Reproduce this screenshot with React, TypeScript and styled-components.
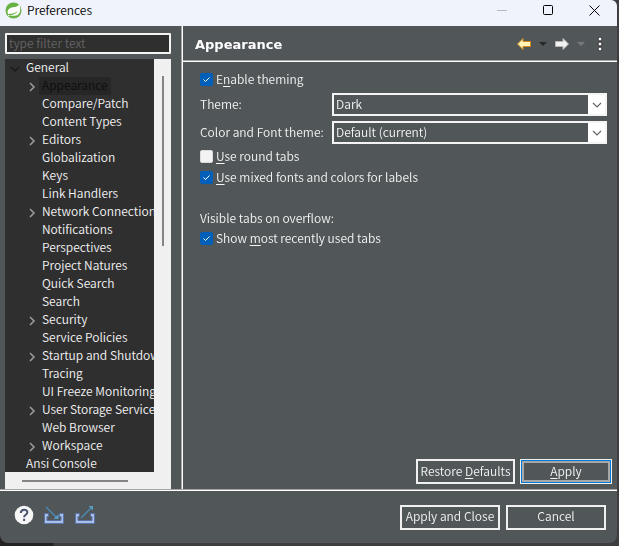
import React, { useState } from 'react';
import styled, { createGlobalStyle } from 'styled-components';

const Global = createGlobalStyle`
  * { box-sizing: border-box; }
  body { margin: 0; background: #393b3d; }
  body, button, input, select {
    font-family: "Noto Sans CJK KR", "Noto Sans", sans-serif;
    font-size: 12px;
    font-weight: 350;
    line-height: 16px;
  }
  u { text-underline-offset: 2px; }
`;

const Desktop = styled.div`
  height: 100vh;
  padding: 0 2px 3px 0;
  display: flex;
  background: linear-gradient(90deg, #242223 53px, #3f3d40 54px);
`;

const Window = styled.div`
  flex: 1;
  min-width: 0;
  display: flex;
  flex-direction: column;
  background: #515658;
  color: #f4f4f4;
  border-radius: 0 6px 8px 8px;
  overflow: hidden;
`;

const TitleBar = styled.header`
  height: 26px;
  flex: none;
  display: flex;
  align-items: center;
  padding: 0 15px 6px 5px;
  gap: 5px;
  background: #f0f3fb;
  color: #000;
`;

const WindowTitle = styled.h1`
  flex: 1;
  margin: 0;
  font-size: 12px;
  font-weight: 350;
`;

const WindowControls = styled.div`
  display: flex;
  gap: 30px;
`;

const IconButton = styled.button<{ $size?: number }>`
  display: inline-flex;
  align-items: center;
  justify-content: center;
  width: ${(p) => p.$size ?? 16}px;
  height: ${(p) => p.$size ?? 16}px;
  padding: 0;
  border: 0;
  background: none;
  color: inherit;
  svg { display: block; flex: none; }
`;

const Main = styled.div`
  flex: 1;
  display: flex;
  min-height: 0;
`;

const Sidebar = styled.aside`
  width: 181px;
  flex: none;
  display: flex;
  flex-direction: column;
  padding: 7px 10px 0 5px;
`;

const Filter = styled.input`
  width: 100%;
  height: 21px;
  flex: none;
  margin-bottom: 5px;
  padding: 0 2px 2px;
  border: 2px solid #f4f4f4;
  border-radius: 1px;
  background: #2f2f2f;
  color: #eee;
  outline: 0;
  &::placeholder { color: #646464; opacity: 1; }
`;

const TreeFrame = styled.div`
  flex: 1;
  min-height: 0;
  display: grid;
  grid-template-columns: minmax(0, 1fr) 17px;
  grid-template-rows: minmax(0, 1fr) 17px;
  background: #f0f0f0;
`;

const Tree = styled.ul`
  margin: 0;
  padding: 0;
  list-style: none;
  background: #2f2f2f;
  overflow: auto;
  scrollbar-width: none;
`;

const TreeItem = styled.li<{ $level: number }>`
  height: 18px;
  display: flex;
  align-items: flex-start;
  padding-left: ${(p) => 4 + p.$level * 16}px;
  white-space: nowrap;
`;

const Twisty = styled.span<{ $dark?: boolean }>`
  width: 14px;
  height: 18px;
  flex: none;
  display: flex;
  align-items: flex-end;
  color: ${(p) => (p.$dark ? '#191919' : '#9a9a9a')};
  svg { display: block; }
`;

const TreeLabel = styled.span<{ $selected?: boolean }>`
  height: 18px;
  padding: 0 3px;
  border-radius: 2px;
  background: ${(p) => (p.$selected ? '#262626' : 'transparent')};
  color: ${(p) => (p.$selected ? '#0c0c0c' : '#f4f4f4')};
`;

const Track = styled.div<{ $horizontal?: boolean }>`
  padding: ${(p) => (p.$horizontal ? '8px 26px 0 17px' : '17px 0 0 8px')};
`;

const Thumb = styled.div<{ $horizontal?: boolean }>`
  width: ${(p) => (p.$horizontal ? 'auto' : '2px')};
  height: ${(p) => (p.$horizontal ? '2px' : '170px')};
  background: #858585;
`;

const Page = styled.section`
  flex: 1;
  min-width: 0;
  display: flex;
  flex-direction: column;
  padding-left: 1px;
  border-left: 1px solid #a2a4a5;
  box-shadow: inset 1px 0 #fff;
`;

const PageHeader = styled.div`
  height: 36px;
  flex: none;
  display: flex;
  align-items: center;
  justify-content: space-between;
  padding: 0 9px 0 12px;
  border-bottom: 1px solid #fff;
  box-shadow: inset 0 -1px #a2a4a5;
`;

const PageTitle = styled.h2`
  margin: 0;
  padding-top: 2px;
  font: 700 13px/18px "DejaVu Sans", sans-serif;
  color: #fff;
`;

const PageTools = styled.div`
  display: flex;
  align-items: center;
  gap: 3px;
  padding-top: 1px;
`;

const Form = styled.form`
  flex: 1;
  display: flex;
  flex-direction: column;
  padding: 8px 10px 5px 17px;
`;

const CheckRow = styled.label`
  height: 19px;
  display: flex;
  align-items: center;
  gap: 3px;
  & > span { padding-bottom: 2px; }
  & + & { margin-top: 2px; }
`;

const CheckBox = styled.input`
  appearance: none;
  width: 13px;
  height: 13px;
  flex: none;
  margin: 0;
  border: 1px solid #dcdcdc;
  border-radius: 2px;
  background: #f3f3f3;
  &:checked {
    border-color: #005fb8;
    background: #005fb8 url("data:image/svg+xml,%3Csvg xmlns='http://www.w3.org/2000/svg' viewBox='0 0 11 11'%3E%3Cpath d='M2.5 5.5l2 2 4-4' fill='none' stroke='white'/%3E%3C/svg%3E");
  }
`;

const Fields = styled.div`
  display: grid;
  grid-template-columns: 123px minmax(0, 1fr);
  gap: 5px 9px;
  align-items: center;
  margin: 4px 0 3px;
`;

const FieldLabel = styled.label`
  padding-bottom: 2px;
  white-space: nowrap;
`;

const SelectFrame = styled.div`
  display: grid;
  grid-template-columns: minmax(0, 1fr) 17px;
  align-items: center;
  height: 23px;
  border: 2px solid #f4f4f4;
  background: linear-gradient(270deg, #fff 17px, #515658 17px);
  svg { grid-area: 1 / 2; justify-self: center; pointer-events: none; }
`;

const Select = styled.select`
  grid-area: 1 / 1 / 2 / 3;
  appearance: none;
  width: 100%;
  padding: 0 20px 2px 2px;
  border: 0;
  outline: 0;
  background: transparent;
  color: #f4f4f4;
`;

const GroupLabel = styled.p`
  margin: 23px 0 3px;
`;

const Actions = styled.div`
  display: flex;
  justify-content: flex-end;
  gap: 5px;
  margin: auto -5px 0 0;
`;

const Button = styled.button<{ $width: number; $focused?: boolean }>`
  width: ${(p) => p.$width}px;
  height: 25px;
  padding: 0 0 2px;
  border: 2px solid #f0f0f0;
  background: #515658;
  color: #f4f4f4;
  white-space: nowrap;
  ${(p) => p.$focused && `
    border-width: 1px;
    box-shadow: inset 0 0 0 1px #0078d7, inset 0 0 0 3px #a8a8a8;
  `}
`;

const Footer = styled.footer`
  height: 54px;
  flex: none;
  display: flex;
  align-items: center;
  gap: 6px;
  padding: 1px 11px 0 14px;
  border-top: 1px solid #a2a4a5;
  box-shadow: inset 0 1px #fff;
`;

const FooterTools = styled.div`
  flex: 1;
  display: flex;
  align-items: center;
  gap: 9px;
  padding-bottom: 4px;
`;

const ChevronRight = () => (
  <svg width="14" height="14" viewBox="0 0 14 14" fill="none" stroke="currentColor" strokeWidth="1.6"><path d="M5 2l4 4-4 4" /></svg>
);
const ChevronDown = () => (
  <svg width="14" height="14" viewBox="0 0 14 14" fill="none" stroke="currentColor" strokeWidth="1.4"><path d="M2 4l4 4 4-4" /></svg>
);
const SelectArrow = () => (
  <svg width="10" height="6" viewBox="0 0 10 6" fill="none" stroke="#666" strokeWidth="1.2"><path d="M1 1l4 4 4-4" /></svg>
);
const Triangle = ({ color }: { color: string }) => (
  <svg width="8" height="4" viewBox="0 0 8 4"><path d="M0 0h8L4 4z" fill={color} /></svg>
);
const Leaf = () => (
  <svg width="17" height="17" viewBox="0 0 17 17">
    <circle cx="8.500" cy="8.500" r="8" fill="#68b245" />
    <path d="M14.200 2.200c1.600 3.600 1.500 8.200-1 10.200-2.500 2-6 1.300-9.200 1.100 3.500-.5 7-1.500 9-4.500-2.500 2-5.500 2.900-10 3C1.500 8.500 4 5.600 8 5.200c2.800-.3 5-.8 6.200-3z" fill="#fff" />
    <circle cx="3.600" cy="13.600" r=".8" fill="#fff" />
  </svg>
);
const HelpIcon = () => (
  <svg width="20" height="20" viewBox="0 0 20 20">
    <circle cx="10" cy="10" r="9.300" fill="#f6f6f6" />
    <path d="M6.800 8c.1-4.300 6.600-4.200 6.600-.7 0 2.500-3.300 2.500-3.300 5M10.100 13.800v2.200" fill="none" stroke="#4a5470" strokeWidth="2" />
  </svg>
);
const TrayIcon = ({ out }: { out?: boolean }) => (
  <svg width="22" height="20" viewBox="0 0 22 20" fill="none">
    <path d="M5.500 8.500h-4v10h19v-10h-4v3h1.500v4H4v-4h1.500z" fill="#a9bfe6" stroke="#5873ab" />
    {out ? (
      <><path d="M7 13L18 2" stroke="#4a8fbd" strokeWidth="1.300" /><path d="M14.500 1H19v4.500z" fill="#5a9cc6" /></>
    ) : (
      <><path d="M3 2l11 11" stroke="#4a8fbd" strokeWidth="1.300" /><path d="M15.500 9v5H10.500z" fill="#5a9cc6" /></>
    )}
  </svg>
);

interface Node { label: string; level: number; twisty?: 'open' | 'closed'; selected?: boolean; }
const nodes: Node[] = [
  { label: 'General', level: 0, twisty: 'open' },
  { label: 'Appearance', level: 1, twisty: 'closed', selected: true },
  { label: 'Compare/Patch', level: 1 },
  { label: 'Content Types', level: 1 },
  { label: 'Editors', level: 1, twisty: 'closed' },
  { label: 'Globalization', level: 1 },
  { label: 'Keys', level: 1 },
  { label: 'Link Handlers', level: 1 },
  { label: 'Network Connections', level: 1, twisty: 'closed' },
  { label: 'Notifications', level: 1 },
  { label: 'Perspectives', level: 1 },
  { label: 'Project Natures', level: 1 },
  { label: 'Quick Search', level: 1 },
  { label: 'Search', level: 1 },
  { label: 'Security', level: 1, twisty: 'closed' },
  { label: 'Service Policies', level: 1 },
  { label: 'Startup and Shutdown', level: 1, twisty: 'closed' },
  { label: 'Tracing', level: 1 },
  { label: 'UI Freeze Monitoring', level: 1 },
  { label: 'User Storage Service', level: 1, twisty: 'closed' },
  { label: 'Web Browser', level: 1 },
  { label: 'Workspace', level: 1, twisty: 'closed' },
  { label: 'Ansi Console', level: 0 },
];

export default function App() {
  const [filter, setFilter] = useState('');
  return (
    <>
      <Global />
      <Desktop>
        <Window>
          <TitleBar>
            <Leaf />
            <WindowTitle>Preferences</WindowTitle>
            <WindowControls>
              <IconButton aria-label="Minimize" disabled><svg width="10" height="10" stroke="#b8bac0"><path d="M0 5.500h10" /></svg></IconButton>
              <IconButton aria-label="Maximize"><svg width="10" height="10" fill="none" stroke="#000"><rect x=".5" y=".5" width="9" height="9" rx="1" /></svg></IconButton>
              <IconButton aria-label="Close"><svg width="11" height="11" stroke="#000"><path d="M.5.5l10 10M10.500.5l-10 10" /></svg></IconButton>
            </WindowControls>
          </TitleBar>
          <Main>
            <Sidebar>
              <Filter aria-label="Filter preferences" placeholder="type filter text" value={filter} onChange={(e) => setFilter(e.target.value)} />
              <TreeFrame>
                <Tree>
                  {nodes.map((n) => (
                    <TreeItem key={n.label} $level={n.level}>
                      <Twisty $dark={n.twisty === 'open'}>
                        {n.twisty === 'open' && <ChevronDown />}
                        {n.twisty === 'closed' && <ChevronRight />}
                      </Twisty>
                      <TreeLabel $selected={n.selected}>{n.label}</TreeLabel>
                    </TreeItem>
                  ))}
                </Tree>
                <Track><Thumb /></Track>
                <Track $horizontal><Thumb $horizontal /></Track>
              </TreeFrame>
            </Sidebar>
            <Page>
              <PageHeader>
                <PageTitle>Appearance</PageTitle>
                <PageTools>
                  <IconButton aria-label="Back"><svg width="16" height="16" viewBox="0 0 16 16"><path d="M1.500 8L7 2.500V5.500h7.500v5H7v3z" fill="#fff3b8" stroke="#d08a1c" /></svg></IconButton>
                  <IconButton aria-label="Back history"><Triangle color="#282828" /></IconButton>
                  <IconButton aria-label="Forward"><svg width="16" height="16" viewBox="0 0 16 16"><path d="M14.500 8L9 2.500V5.500H1.500v5H9v3z" fill="#f2f2f2" stroke="#b5b5b5" /></svg></IconButton>
                  <IconButton aria-label="Forward history"><Triangle color="#77797b" /></IconButton>
                  <IconButton aria-label="View menu"><svg width="16" height="16" fill="#fff" stroke="#333"><circle cx="8" cy="3" r="2" /><circle cx="8" cy="8" r="2" /><circle cx="8" cy="13" r="2" /></svg></IconButton>
                </PageTools>
              </PageHeader>
              <Form onSubmit={(e) => e.preventDefault()}>
                <CheckRow><CheckBox type="checkbox" defaultChecked /><span>E<u>n</u>able theming</span></CheckRow>
                <Fields>
                  <FieldLabel htmlFor="theme">Theme:</FieldLabel>
                  <SelectFrame><Select id="theme"><option>Dark</option></Select><SelectArrow /></SelectFrame>
                  <FieldLabel htmlFor="colors">Color and Font theme:</FieldLabel>
                  <SelectFrame><Select id="colors"><option>Default (current)</option></Select><SelectArrow /></SelectFrame>
                </Fields>
                <CheckRow><CheckBox type="checkbox" /><span><u>U</u>se round tabs</span></CheckRow>
                <CheckRow><CheckBox type="checkbox" defaultChecked /><span><u>U</u>se mixed fonts and colors for labels</span></CheckRow>
                <GroupLabel>Visible tabs on overflow:</GroupLabel>
                <CheckRow><CheckBox type="checkbox" defaultChecked /><span>Show <u>m</u>ost recently used tabs</span></CheckRow>
                <Actions>
                  <Button type="button" $width={99}>Restore <u>D</u>efaults</Button>
                  <Button type="button" $width={92} $focused><u>A</u>pply</Button>
                </Actions>
              </Form>
            </Page>
          </Main>
          <Footer>
            <FooterTools>
              <IconButton aria-label="Help" $size={20}><HelpIcon /></IconButton>
              <IconButton aria-label="Import preferences" $size={22}><TrayIcon /></IconButton>
              <IconButton aria-label="Export preferences" $size={22}><TrayIcon out /></IconButton>
            </FooterTools>
            <Button type="button" $width={100}>Apply and Close</Button>
            <Button type="button" $width={100}>Cancel</Button>
          </Footer>
        </Window>
      </Desktop>
    </>
  );
}
